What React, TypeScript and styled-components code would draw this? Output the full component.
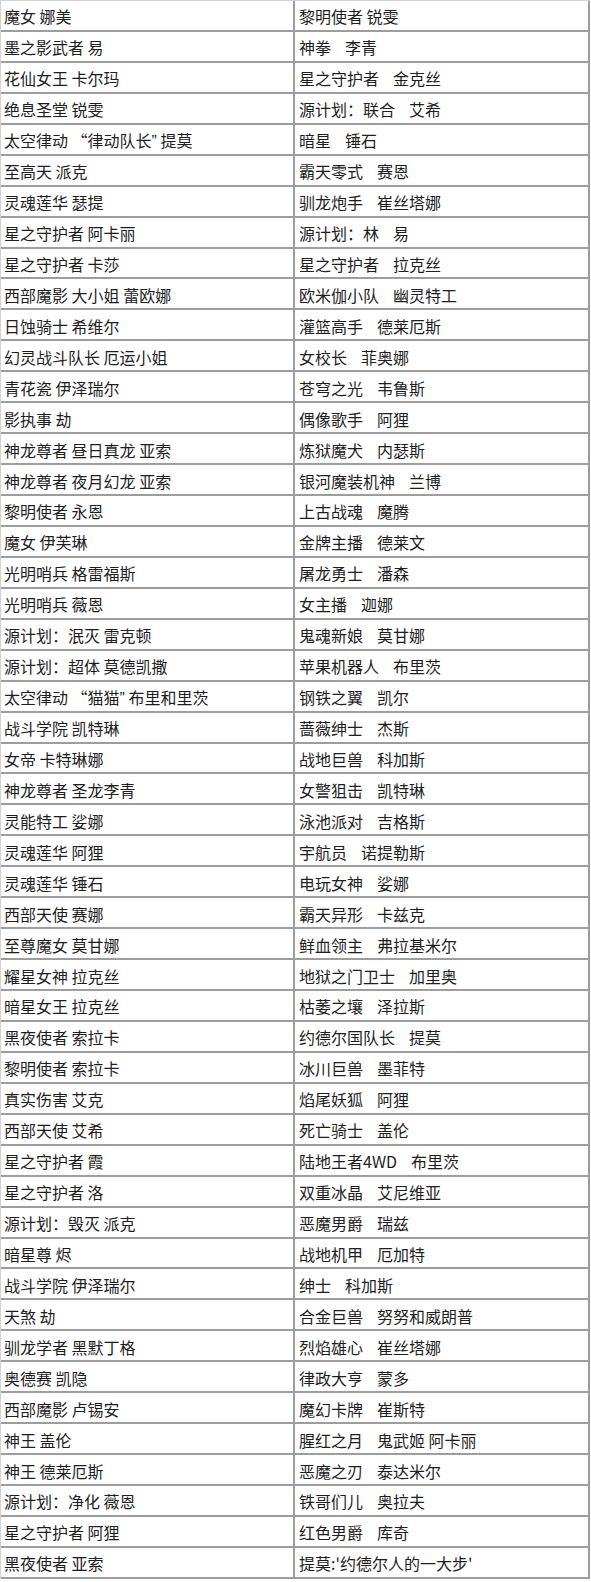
import React from 'react';
import styled, { createGlobalStyle } from 'styled-components';

const GlobalStyle = createGlobalStyle`
  html, body {
    margin: 0;
    padding: 0;
    background: #fff;
  }
`;

const CloseQuote = styled.span`
  font-family: "Liberation Sans", Arial, sans-serif;
`;

// left column: skin name, right column: [skin, champion]
const rows: [React.ReactNode, [string, string?]][] = [
  ['魔女 娜美', ['黎明使者 锐雯']],
  ['墨之影武者 易', ['神拳', '李青']],
  ['花仙女王 卡尔玛', ['星之守护者', '金克丝']],
  ['绝息圣堂 锐雯', ['源计划：联合', '艾希']],
  [<>太空律动 “律动队长<CloseQuote>”</CloseQuote> 提莫</>, ['暗星', '锤石']],
  ['至高天 派克', ['霸天零式', '赛恩']],
  ['灵魂莲华 瑟提', ['驯龙炮手', '崔丝塔娜']],
  ['星之守护者 阿卡丽', ['源计划：林', '易']],
  ['星之守护者 卡莎', ['星之守护者', '拉克丝']],
  ['西部魔影 大小姐 蕾欧娜', ['欧米伽小队', '幽灵特工']],
  ['日蚀骑士 希维尔', ['灌篮高手', '德莱厄斯']],
  ['幻灵战斗队长 厄运小姐', ['女校长', '菲奥娜']],
  ['青花瓷 伊泽瑞尔', ['苍穹之光', '韦鲁斯']],
  ['影执事 劫', ['偶像歌手', '阿狸']],
  ['神龙尊者 昼日真龙 亚索', ['炼狱魔犬', '内瑟斯']],
  ['神龙尊者 夜月幻龙 亚索', ['银河魔装机神', '兰博']],
  ['黎明使者 永恩', ['上古战魂', '魔腾']],
  ['魔女 伊芙琳', ['金牌主播', '德莱文']],
  ['光明哨兵 格雷福斯', ['屠龙勇士', '潘森']],
  ['光明哨兵 薇恩', ['女主播', '迦娜']],
  ['源计划：泯灭 雷克顿', ['鬼魂新娘', '莫甘娜']],
  ['源计划：超体 莫德凯撒', ['苹果机器人', '布里茨']],
  [<>太空律动 “猫猫<CloseQuote>”</CloseQuote> 布里和里茨</>, ['钢铁之翼', '凯尔']],
  ['战斗学院 凯特琳', ['蔷薇绅士', '杰斯']],
  ['女帝 卡特琳娜', ['战地巨兽', '科加斯']],
  ['神龙尊者 圣龙李青', ['女警狙击', '凯特琳']],
  ['灵能特工 娑娜', ['泳池派对', '吉格斯']],
  ['灵魂莲华 阿狸', ['宇航员', '诺提勒斯']],
  ['灵魂莲华 锤石', ['电玩女神', '娑娜']],
  ['西部天使 赛娜', ['霸天异形', '卡兹克']],
  ['至尊魔女 莫甘娜', ['鲜血领主', '弗拉基米尔']],
  ['耀星女神 拉克丝', ['地狱之门卫士', '加里奥']],
  ['暗星女王 拉克丝', ['枯萎之壤', '泽拉斯']],
  ['黑夜使者 索拉卡', ['约德尔国队长', '提莫']],
  ['黎明使者 索拉卡', ['冰川巨兽', '墨菲特']],
  ['真实伤害 艾克', ['焰尾妖狐', '阿狸']],
  ['西部天使 艾希', ['死亡骑士', '盖伦']],
  ['星之守护者 霞', ['陆地王者4WD', '布里茨']],
  ['星之守护者 洛', ['双重冰晶', '艾尼维亚']],
  ['源计划：毁灭 派克', ['恶魔男爵', '瑞兹']],
  ['暗星尊 烬', ['战地机甲', '厄加特']],
  ['战斗学院 伊泽瑞尔', ['绅士', '科加斯']],
  ['天煞 劫', ['合金巨兽', '努努和威朗普']],
  ['驯龙学者 黑默丁格', ['烈焰雄心', '崔丝塔娜']],
  ['奥德赛 凯隐', ['律政大亨', '蒙多']],
  ['西部魔影 卢锡安', ['魔幻卡牌', '崔斯特']],
  ['神王 盖伦', ['腥红之月', '鬼武姬 阿卡丽']],
  ['神王 德莱厄斯', ['恶魔之刃', '泰达米尔']],
  ['源计划：净化 薇恩', ['铁哥们儿', '奥拉夫']],
  ['星之守护者 阿狸', ['红色男爵', '库奇']],
  ['黑夜使者 亚索', ["提莫:'约德尔人的一大步'"]],
];

const SkinTable = styled.div`
  display: grid;
  grid-template-columns: 294px 295px;
  grid-auto-rows: 30.94px;
  width: 590px;
  box-sizing: border-box;
  border-top: 1px solid #d2d2d2;
  border-left: 1px solid #d2d2d2;
  font-family: "Noto Sans CJK SC", "Microsoft YaHei", sans-serif;
  font-size: 16px;
  color: #1e1e1e;
`;

const Cell = styled.div<{ $right?: boolean }>`
  display: flex;
  align-items: center;
  box-sizing: border-box;
  padding: 2px 3px 0 ${(p) => (p.$right ? '4px' : '3px')};
  border-right: 2px solid #9d9d9d;
  border-bottom: 2px solid #9d9d9d;
  white-space: pre;
  overflow: hidden;
`;

const Champ = styled.span`
  margin-left: 14px;
`;

const App: React.FC = () => (
  <>
    <GlobalStyle />
    <SkinTable>
      {rows.map(([left, [skin, champ]], i) => (
        <React.Fragment key={i}>
          <Cell>
            <span>{left}</span>
          </Cell>
          <Cell $right>
            {skin}
            {champ && <Champ>{champ}</Champ>}
          </Cell>
        </React.Fragment>
      ))}
    </SkinTable>
  </>
);

export default App;
